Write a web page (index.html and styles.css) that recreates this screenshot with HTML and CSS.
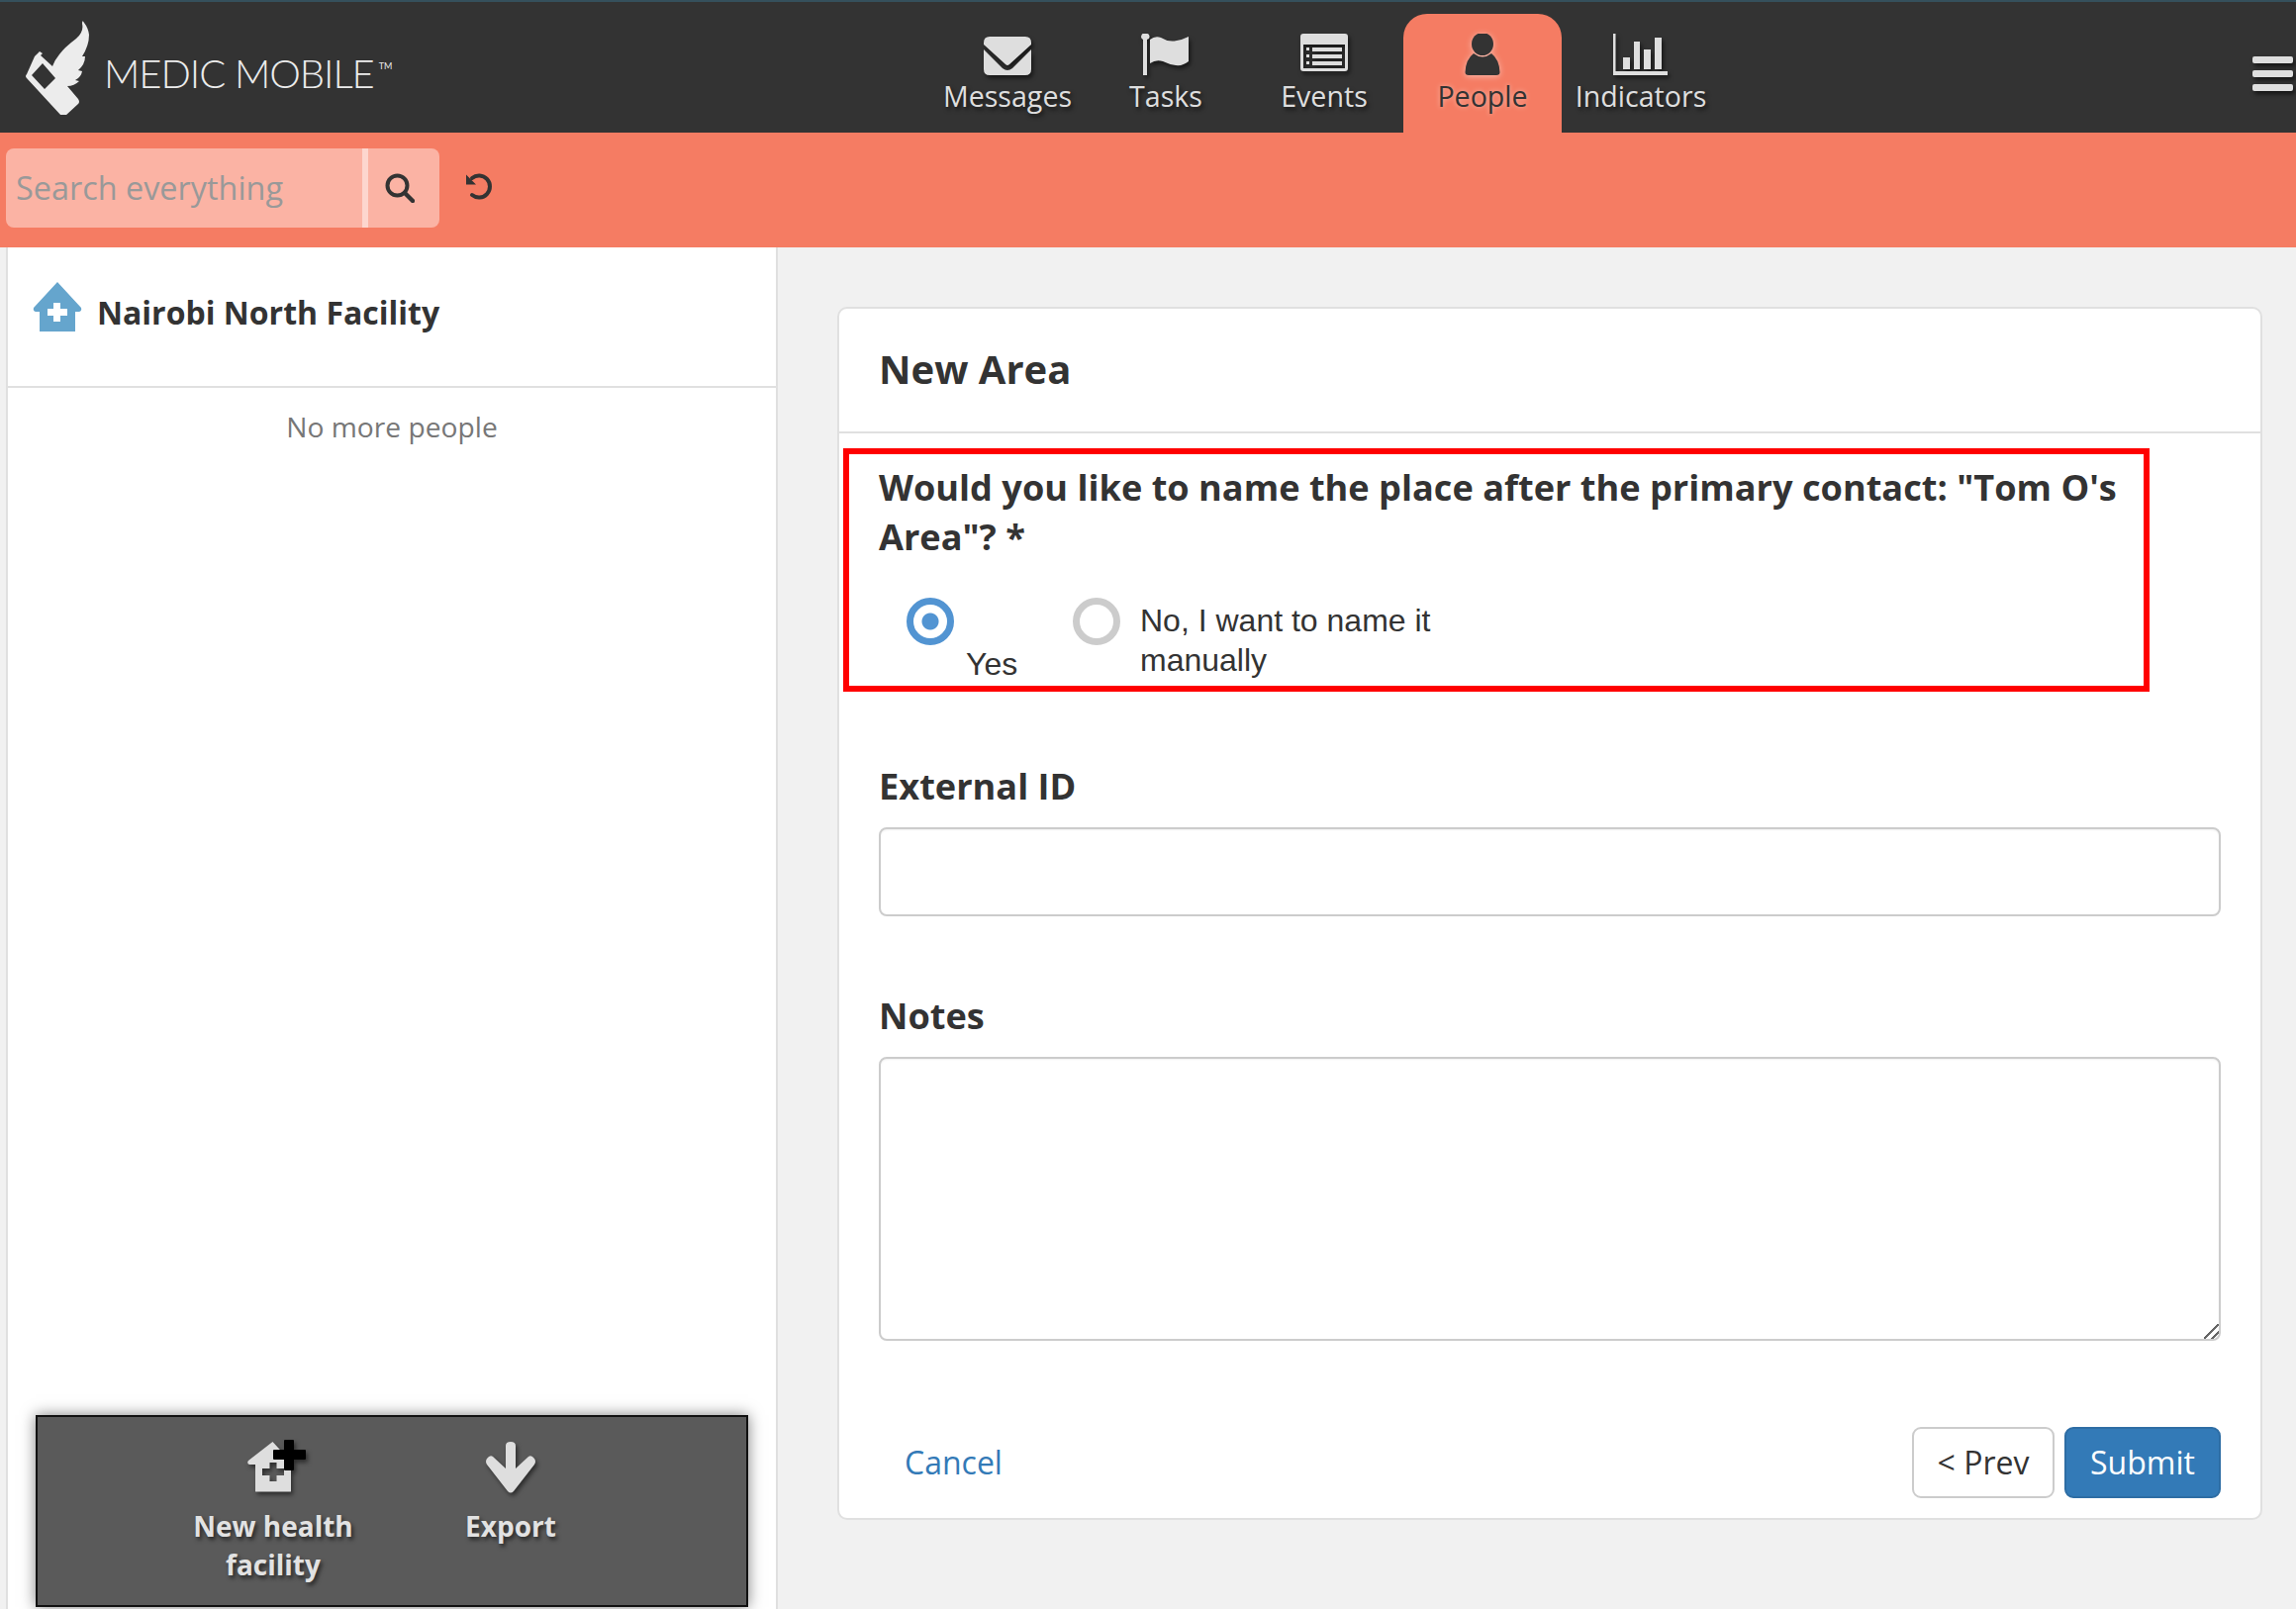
FILE: index.html
```html
<!DOCTYPE html>
<html lang="en">
<head>
<meta charset="utf-8">
<title>Medic Mobile</title>
<link rel="stylesheet" href="styles.css">
</head>
<body>
<header class="topbar">
  <div class="brand">
    <svg class="brand-mark" viewBox="0 0 70 100" width="70" height="100" aria-hidden="true">
      <path fill-rule="evenodd" fill="#ececec" d="M6 59 Q4 61 6 63 L41 101 Q43 103 45 101 L58 89 Q60 87 58 84 L47 71 Q54 71 59 66 L55 65 Q61 62 62 56 L58 55 Q65 49 65 41 L62 41 Q69 30 69 19 Q68 12 64 7 Q62 3 62 8 Q64 16 56 23 Q44 32 39 39 Q34 45 32 51 L20 40 L22 38 L19 36 L16 39 L14 41 Z M11 60 L22 48 L35 63 L24 74 Z"/>
    </svg>
    <span class="brand-name">MEDIC MOBILE</span><span class="brand-tm">TM</span>
  </div>
  <nav class="tabs">
    <a class="tab">
      <svg class="tab-icon" viewBox="0 0 50 42" width="50" height="42"><path fill="#dedede" d="M1 9 Q1 3 7 3 H43 Q49 3 49 9 V11 L27 31 Q25 33 23 31 L1 11 Z M1 16 L20 35 Q25 39 30 35 L49 16 V36 Q49 42 43 42 H7 Q1 42 1 36 Z"/></svg>
      <span class="tab-label">Messages</span>
    </a>
    <a class="tab">
      <svg class="tab-icon" viewBox="0 0 50 42" width="50" height="42"><path fill="#dedede" d="M2 6 A2.8 2.8 0 0 1 5 0 A2.8 2.8 0 0 1 6 6 V42 H2 Z M9 6 Q14 2 20 4 Q28 9 36 7 Q42 6 48 3 V28 Q42 33 35 32 Q28 31 22 28 Q15 26 9 30 Z"/></svg>
      <span class="tab-label">Tasks</span>
    </a>
    <a class="tab">
      <svg class="tab-icon" viewBox="0 0 50 42" width="50" height="42"><path fill-rule="evenodd" fill="#dedede" d="M4 0 H46 Q49 0 49 3 V35 Q49 38 46 38 H4 Q1 38 1 35 V3 Q1 0 4 0 Z M4 11 V35 H46 V11 Z"/><path fill="#dedede" d="M7 14 H10 V17 H7 Z M13 14 H43 V18 H13 Z M7 21 H10 V24 H7 Z M13 21 H43 V25 H13 Z M7 28 H10 V31 H7 Z M13 28 H43 V32 H13 Z"/></svg>
      <span class="tab-label">Events</span>
    </a>
    <a class="tab tab-active">
      <svg class="tab-icon" viewBox="0 0 50 42" width="50" height="42"><ellipse fill="#333" cx="25" cy="10.500" rx="11" ry="11.500"/><path fill="#333" d="M16 20 Q25 27 34 20 Q42 26 42.500 39 Q42.500 42 39 42 H11 Q7.500 42 7.500 39 Q8 26 16 20 Z"/></svg>
      <span class="tab-label">People</span>
    </a>
    <a class="tab">
      <svg class="tab-icon" viewBox="0 0 56 42" width="56" height="42"><path fill="#dedede" d="M0 0 H2.500 V38 H55 V42 H0 Z M10 24 H17 V36 H10 Z M21 8 H27 V36 H21 Z M31 16 H38 V36 H31 Z M42 4 H49 V36 H42 Z"/></svg>
      <span class="tab-label">Indicators</span>
    </a>
  </nav>
  <button class="menu" aria-label="Menu"><span class="menu-bar"></span><span class="menu-bar"></span><span class="menu-bar"></span></button>
</header>

<div class="toolbar">
  <div class="search">
    <div class="search-input">Search everything</div>
    <div class="search-btn">
      <svg viewBox="0 0 30 30" width="30" height="30"><circle cx="12.500" cy="12.500" r="10" fill="none" stroke="#333" stroke-width="4"/><path d="M20 20 L28 28" stroke="#333" stroke-width="4.500" stroke-linecap="round"/></svg>
    </div>
  </div>
  <svg class="refresh" viewBox="0 0 28 28" width="28" height="28"><path d="M7 6 A11 11 0 1 1 7 23" fill="none" stroke="#333" stroke-width="4" stroke-linecap="round"/><path d="M1 2.500 L1 12.500 L11 12.500 Z" fill="#333"/></svg>
</div>

<main class="main">
  <aside class="sidebar">
    <div class="side-head">
      <svg class="side-icon" viewBox="0 0 50 50" width="50" height="50"><path fill-rule="evenodd" fill="#65a5cd" d="M25 0 L49 26 Q50 29 47 30 H43 V50 H7 V30 H3 Q0 29 1 26 Z M21 21 V27 H15 V34 H21 V40 H28 V34 H35 V27 H28 V21 Z"/></svg>
      <h2 class="side-title">Nairobi North Facility</h2>
    </div>
    <p class="side-empty">No more people</p>
    <div class="actions">
      <div class="action">
        <span class="action-icon">
          <svg class="icon-house" viewBox="0 0 60 54" width="60" height="54"><path fill-rule="evenodd" fill="#dedede" d="M25.500 2 L44 22 V52 Q44 52.500 43 52.500 H9 Q8 52.500 8 52 V25 H2 Q-1 24 1 21 Z M22.500 23 V29 H15 V36 H22.500 V42 H29.500 V36 H37 V29 H29.500 V23 Z"/><path fill="#000" d="M37 1 Q37 0 38 0 H46 Q47 0 47 1 V10 H58 Q59 10 59 11 V19 Q59 20 58 20 H47 V30 Q47 31 46 31 H38 Q37 31 37 30 V20 H27 Q26 20 26 19 V11 Q26 10 27 10 H37 Z"/></svg>
        </span>
        <span class="action-label">New health facility</span>
      </div>
      <div class="action">
        <span class="action-icon">
          <svg viewBox="0 0 52 52" width="52" height="52"><path fill="#dedede" d="M21 4 Q21 0 26 0 Q31 0 31 4 V27 L44 15 Q47 13 50 17 Q52 20 50 23 L29 50 Q26 53 23 50 L2 23 Q0 20 2 17 Q5 13 8 15 L21 27 Z"/></svg>
        </span>
        <span class="action-label">Export</span>
      </div>
    </div>
  </aside>

  <section class="content">
    <div class="card">
      <h1 class="card-title">New Area</h1>
      <form class="form">
        <div class="question">
          <p class="q-text">Would you like to name the place after the primary contact: "Tom O's Area"? *</p>
          <div class="options">
            <div class="option option-yes">
              <span class="radio radio-on"></span>
              <span class="opt-label opt-label-low">Yes</span>
            </div>
            <div class="option option-no">
              <span class="radio"></span>
              <span class="opt-label opt-label-wrap">No, I want to name it manually</span>
            </div>
          </div>
        </div>
        <div class="field field-ext">
          <label class="field-label" for="ext">External ID</label>
          <input class="field-input" id="ext" type="text">
        </div>
        <div class="field field-notes">
          <label class="field-label" for="notes">Notes</label>
          <textarea class="field-area" id="notes"></textarea>
        </div>
        <div class="form-foot">
          <a class="cancel">Cancel</a>
          <div class="buttons">
            <button class="btn btn-prev" type="button">&lt; Prev</button>
            <button class="btn btn-submit" type="button">Submit</button>
          </div>
        </div>
      </form>
    </div>
  </section>
</main>
</body>
</html>
```
FILE: styles.css
```css
* { box-sizing: border-box; }
html, body { margin: 0; padding: 0; }
body {
  width: 2320px;
  height: 1626px;
  overflow: hidden;
  background: #f1f1f1;
  color: #333;
  font-family: "Open Sans", sans-serif;
}

/* top bar */
.topbar {
  display: flex;
  height: 134px;
  background: #333;
  border-top: 2px solid #35505c;
}
.brand {
  display: flex;
  width: 938px;
  padding: 14px 0 0 21px;
  align-items: flex-start;
}
.brand-mark { display: block; margin-right: 14px; }
.brand-name {
  margin-top: 34px;
  color: #ececec;
  font-family: Lato, sans-serif;
  font-weight: 300;
  font-size: 40px;
  letter-spacing: -1.050px;
  line-height: 48px;
  white-space: nowrap;
}
.brand-tm {
  margin: 46px 0 0 5px;
  color: #ececec;
  font-family: Lato, sans-serif;
  font-size: 9px;
  line-height: 9px;
}
.tabs { display: flex; padding-top: 12px; }
.tab {
  display: flex;
  flex-direction: column;
  align-items: center;
  width: 160px;
  height: 120px;
  padding-top: 20px;
  color: #dedede;
}
.tab-icon { display: block; height: 42px; filter: drop-shadow(2px 3px 2px rgba(0,0,0,.55)); }
.tab-label {
  margin-top: 2px;
  font-size: 28.600px;
  line-height: 38px;
  text-shadow: 2px 3px 4px rgba(0,0,0,.6);
}
.tab-active {
  background: #f57c63;
  border-radius: 24px 24px 0 0;
  color: #333;
}
.tab-active .tab-icon { filter: drop-shadow(0 1px 3px rgba(255,255,255,.5)); }
.tab-active .tab-label { text-shadow: 0 0 5px rgba(255,255,255,.45); }
.menu {
  display: flex;
  flex-direction: column;
  gap: 7px;
  margin: 55px 3px 0 auto;
  padding: 0;
  width: 41px;
  background: none;
  border: 0;
}
.menu-bar {
  display: block;
  height: 7px;
  background: #dedede;
  border-radius: 2px;
  box-shadow: 2px 3px 4px rgba(0,0,0,.6);
}

/* toolbar */
.toolbar {
  display: flex;
  height: 116px;
  padding: 16px 0 0 6px;
  background: #f57c63;
}
.search {
  display: flex;
  width: 438px;
  height: 80px;
  background: #fbb3a4;
  border-radius: 8px;
  overflow: hidden;
}
.search-input {
  width: 360px;
  padding-left: 10px;
  color: #999;
  font-size: 32.400px;
  line-height: 78px;
  white-space: nowrap;
}
.search-btn {
  display: flex;
  align-items: center;
  justify-content: center;
  flex: 1;
  padding-right: 8px;
  border-left: 6px solid #fdd6ce;
}
.refresh { margin: 24px 0 0 26px; }

/* main layout */
.main { display: flex; height: 1376px; }
.sidebar {
  position: relative;
  width: 780px;
  margin-left: 6px;
  background: #fff;
  border-left: 2px solid #e0e0e0;
  border-right: 2px solid #e0e0e0;
}
.side-head {
  display: flex;
  height: 142px;
  padding: 35px 0 0 25px;
  border-bottom: 2px solid #e0e0e0;
}
.side-icon { display: block; flex: none; }
.side-title {
  margin: 7px 0 0 15px;
  font-size: 32px;
  line-height: 48px;
  font-weight: 700;
}
.side-empty {
  margin: 19px 0 0;
  color: #777;
  text-align: center;
  font-size: 28.200px;
  line-height: 40px;
}
.actions {
  position: absolute;
  left: 28px;
  top: 1180px;
  display: flex;
  width: 720px;
  height: 194px;
  padding: 25px 0 0 118px;
  background: #5a5a5a;
  border: 2px solid #111;
  box-shadow: 0 0 14px rgba(0,0,0,.5);
}
.action {
  display: flex;
  flex-direction: column;
  align-items: center;
  width: 240px;
  color: #e2e2e2;
}
.action-icon { display: block; height: 52px; }
.action-icon svg { display: block; filter: drop-shadow(2px 3px 2px rgba(0,0,0,.5)); }
.action-icon .icon-house { margin: -2px 0 0 8px; overflow: visible; }
.action-label {
  width: 190px;
  margin-top: 14px;
  text-align: center;
  font-size: 28px;
  line-height: 39px;
  font-weight: 700;
  text-shadow: 2px 3px 4px rgba(0,0,0,.6);
}

/* content */
.content { padding: 60px 0 0 60px; }
.card {
  width: 1440px;
  height: 1226px;
  background: #fff;
  border: 2px solid #e0e0e0;
  border-radius: 10px;
}
.card-title {
  height: 126px;
  margin: 0;
  padding: 31px 0 0 40px;
  font-size: 40px;
  line-height: 60px;
  font-weight: 700;
  border-bottom: 2px solid #e0e0e0;
}
.form { padding: 15px 39px 0 4px; }
.question {
  width: 1320px;
  height: 246px;
  padding: 8px 0 0 30px;
  border: 6px solid #f00;
}
.q-text {
  margin: 0;
  font-size: 36.150px;
  line-height: 50px;
  font-weight: 700;
}
.options { display: flex; margin-top: 37px; padding-left: 28px; }
.option { display: flex; align-items: flex-start; }
.option-yes { width: 168px; }
.radio {
  flex: none;
  display: block;
  width: 48px;
  height: 48px;
  background: #fff;
  border: 7px solid #ccc;
  border-radius: 50%;
}
.radio-on {
  border-color: #5294d2;
  background: radial-gradient(circle, #5294d2 0, #5294d2 8px, #fff 9px);
}
.opt-label {
  color: #333;
  font-family: "Liberation Sans", Arial, sans-serif;
  font-size: 32px;
  line-height: 40px;
}
.opt-label-low { margin: 47px 0 0 12px; }
.opt-label-wrap { width: 320px; margin: 3px 0 0 20px; }

.field { padding-left: 36px; }
.field-ext { margin-top: 70px; }
.field-notes { margin-top: 75px; }
.field-label {
  display: block;
  margin-bottom: 17px;
  font-size: 36.150px;
  line-height: 50px;
  font-weight: 700;
}
.field-input, .field-area {
  display: block;
  width: 1356px;
  background: #fff;
  border: 2px solid #ccc;
  border-radius: 8px;
  box-shadow: inset 0 1px 2px rgba(0,0,0,.06);
  outline: 0;
}
.field-input { height: 90px; }
.field-area { height: 287px; }
.field-area::-webkit-resizer {
  background:
    linear-gradient(135deg, transparent 44%, #666 44%, #666 54%, transparent 54%, transparent 70%, #666 70%, #666 80%, transparent 80%);
}
.form-foot {
  display: flex;
  justify-content: space-between;
  align-items: center;
  margin-top: 87px;
  padding-left: 62px;
  width: 1392px;
}
.cancel { color: #337ab7; font-size: 32px; line-height: 72px; }
.buttons { display: flex; gap: 10px; }
.btn {
  height: 72px;
  padding: 0;
  border-radius: 9px;
  font-family: "Open Sans", sans-serif;
  font-size: 32px;
  line-height: 44px;
}
.btn-prev { width: 144px; background: #fff; border: 2px solid #ccc; color: #333; }
.btn-submit { width: 158px; background: #337ab7; border: 2px solid #2e6da4; color: #fff; }
```
